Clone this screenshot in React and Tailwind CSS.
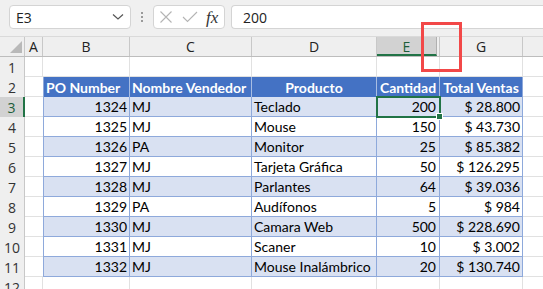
import React from "react";

const rows = [
  [1324, "MJ", "Teclado", 200, "$ 28.800"],
  [1325, "MJ", "Mouse", 150, "$ 43.730"],
  [1326, "PA", "Monitor", 25, "$ 85.382"],
  [1327, "MJ", "Tarjeta Gráfica", 50, "$ 126.295"],
  [1328, "MJ", "Parlantes", 64, "$ 39.036"],
  [1329, "PA", "Audífonos", 5, "$ 984"],
  [1330, "MJ", "Camara Web", 500, "$ 228.690"],
  [1331, "MJ", "Scaner", 10, "$ 3.002"],
  [1332, "MJ", "Mouse Inalámbrico", 20, "$ 130.740"],
];

function RowHead({ n, active }) {
  return (
    <div
      className={
        "w-[25px] shrink-0 h-full flex items-center justify-center border-r text-[14px] " +
        (active
          ? "bg-[#d2d2d2] border-r-2 border-r-[#217346] text-[#1e5e3a]"
          : "bg-[#efefef] border-r-[#c8c8c8] text-[#333]")
      }
      style={{ fontFamily: "'Open Sans','Noto Sans',sans-serif" }}
    >
      {n}
    </div>
  );
}

function PlainRow({ n, tall }) {
  return (
    <div className="flex h-[20px] shrink-0">
      <RowHead n={n} />
      <div className="w-[18px] shrink-0 border-r border-b border-[#e1e1e1]" />
      <div className="w-[87px] shrink-0 border-r border-b border-[#e1e1e1]" />
      <div className="w-[122px] shrink-0 border-r border-b border-[#e1e1e1]" />
      <div className="w-[125px] shrink-0 border-r border-b border-[#e1e1e1]" />
      <div className="w-[63px] shrink-0 border-r border-b border-[#e1e1e1]" />
      <div className="w-[83px] shrink-0 border-r border-b border-[#e1e1e1]" />
      <div className="flex-1 border-b border-[#e1e1e1]" />
    </div>
  );
}

export default function App() {
  return (
    <div
      className="relative w-[543px] h-[289px] overflow-hidden bg-white text-black"
      style={{ fontFamily: "Lato, 'Open Sans', sans-serif" }}
    >
      {/* formula bar */}
      <div className="h-[37px] bg-[#f0f0f0] flex items-start pt-[5px] border-b border-[#dadada]">
        <div className="ml-[9px] w-[122px] h-[24px] bg-white border border-[#d4d4d4] rounded-[4px] flex items-center pl-[6px] pr-[6px]">
          <span className="text-[14px] text-[#222]" style={{ fontFamily: "'Open Sans','Noto Sans',sans-serif" }}>E3</span>
          <svg className="ml-auto" width="12" height="8" viewBox="0 0 12 8">
            <polyline points="1,1.5 6,6 11,1.5" fill="none" stroke="#555" strokeWidth="1.2" />
          </svg>
        </div>
        <div className="w-[22px] h-[24px] flex flex-col items-center justify-center gap-[2px]">
          <div className="w-[2px] h-[2px] bg-[#9a9a9a]" />
          <div className="w-[2px] h-[2px] bg-[#9a9a9a]" />
          <div className="w-[2px] h-[2px] bg-[#9a9a9a]" />
        </div>
        <div className="w-[72px] h-[24px] bg-white border border-[#d4d4d4] rounded-[4px] flex items-center pl-[5px]">
          <svg width="14" height="14" viewBox="0 0 14 14">
            <path d="M1.5 1.5 L12.5 12.5 M12.5 1.5 L1.5 12.5" stroke="#b4b4b4" strokeWidth="1.1" fill="none" />
          </svg>
          <svg className="ml-[9px]" width="16" height="12" viewBox="0 0 16 12">
            <polyline points="1,6 5.5,10.5 15,1" fill="none" stroke="#b4b4b4" strokeWidth="1.1" />
          </svg>
          <span
            className="ml-[8px] text-[17px] italic text-[#333] leading-none"
            style={{ fontFamily: "'Liberation Serif', serif" }}
          >
            fx
          </span>
        </div>
        <div className="ml-[6px] flex-1 h-[24px] bg-white border border-[#d4d4d4] rounded-l-[4px] border-r-0 flex items-center pl-[11px]">
          <span className="text-[14px] text-[#222]" style={{ fontFamily: "'Open Sans','Noto Sans',sans-serif" }}>200</span>
        </div>
      </div>

      {/* column headers */}
      <div
        className="flex h-[20px] bg-[#efefef] border-b border-[#bdbdbd] text-[14px] text-[#222]"
        style={{ fontFamily: "'Open Sans','Noto Sans',sans-serif" }}
      >
        <div className="w-[25px] shrink-0 border-r border-[#c8c8c8] relative">
          <svg className="absolute left-[10px] top-[4px]" width="12" height="12" viewBox="0 0 12 12">
            <polygon points="12,0 12,12 0,12" fill="#b9b9b9" />
          </svg>
        </div>
        <div className="w-[18px] shrink-0 border-r border-[#c8c8c8] flex items-center justify-center">A</div>
        <div className="w-[87px] shrink-0 border-r border-[#c8c8c8] flex items-center justify-center">B</div>
        <div className="w-[122px] shrink-0 border-r border-[#c8c8c8] flex items-center justify-center">C</div>
        <div className="w-[125px] shrink-0 border-r border-[#c8c8c8] flex items-center justify-center">D</div>
        <div className="w-[63px] shrink-0 flex">
          <div className="w-[60px] bg-[#d2d2d2] border-b-2 border-[#217346] border-r border-r-[#b0b0b0] flex items-center justify-center text-[#1e5e3a] pt-[2px]">E</div>
          <div className="w-[3px] border-r border-[#c8c8c8]" />
        </div>
        <div className="w-[83px] shrink-0 border-r border-[#c8c8c8] flex items-center justify-center">G</div>
        <div className="flex-1" />
      </div>

      <PlainRow n={1} />

      {/* table header row 2 */}
      <div className="flex h-[20px]">
        <RowHead n={2} />
        <div className="w-[18px] shrink-0 border-b border-[#e1e1e1]" />
        <div className="w-[87px] shrink-0 bg-[#4472c4] border-l border-[#8ea9db] border-r border-r-[#a8bde3] text-white font-bold text-[14px] flex items-center pl-[2px] w-[87px]">PO Number</div>
        <div className="w-[122px] shrink-0 bg-[#4472c4] border-r border-[#a8bde3] text-white font-bold text-[14px] flex items-center pl-[2px]">Nombre Vendedor</div>
        <div className="w-[125px] shrink-0 bg-[#4472c4] border-r border-[#a8bde3] text-white font-bold text-[14px] flex items-center justify-center">Producto</div>
        <div className="w-[63px] shrink-0 bg-[#4472c4] border-r border-[#a8bde3] text-white font-bold text-[14px] flex items-center justify-center">Cantidad</div>
        <div className="w-[83px] shrink-0 bg-[#4472c4] border-r border-[#8ea9db] text-white font-bold text-[14px] flex items-center justify-center whitespace-nowrap">Total Ventas</div>
        <div className="flex-1 border-b border-[#e1e1e1]" />
      </div>

      {rows.map((r, i) => {
        const stripe = i % 2 === 0;
        const bg = stripe ? "bg-[#d9e1f2]" : "bg-white";
        return (
          <div key={r[0]} className="flex h-[20px] text-[14px]">
            <RowHead n={i + 3} active={i === 0} />
            <div className="w-[18px] shrink-0 border-b border-[#e1e1e1]" />
            <div className={"w-[87px] shrink-0 border-l border-r border-b border-[#8ea9db] flex items-center justify-end pr-[2px] " + bg}>{r[0]}</div>
            <div className={"w-[122px] shrink-0 border-r border-b border-[#8ea9db] flex items-center pl-[2px] " + bg}>{r[1]}</div>
            <div className={"w-[125px] shrink-0 border-r border-b border-[#8ea9db] flex items-center pl-[2px] " + bg}>{r[2]}</div>
            <div className={"w-[63px] shrink-0 border-r border-b border-[#8ea9db] flex items-center justify-end pr-[3px] " + bg}>{r[3]}</div>
            <div className={"w-[83px] shrink-0 border-r border-b border-[#8ea9db] flex items-center justify-end pr-[2px] " + bg}>{r[4]}</div>
            <div className="flex-1 border-b border-[#e1e1e1]" />
          </div>
        );
      })}

      <PlainRow n={12} />

      {/* selection */}
      <div className="absolute left-[376px] top-[96px] w-[65px] h-[22px] border-2 border-[#217346]" />
      <div className="absolute left-[436px] top-[113px] w-[7px] h-[7px] bg-[#217346] border border-white" />

      {/* red highlight box */}
      <div className="absolute left-[421px] top-[22px] w-[41px] h-[50px] border-[3px] border-[#f24848]" />
    </div>
  );
}
